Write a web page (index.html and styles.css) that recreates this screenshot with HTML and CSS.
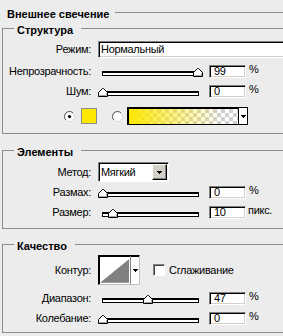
FILE: index.html
```html
<!DOCTYPE html>
<html lang="ru">
<head>
<meta charset="utf-8">
<title>Внешнее свечение</title>
<link rel="stylesheet" href="styles.css">
</head>
<body>
<div class="panel">
  <div class="panel-head">
    <span class="panel-title">Внешнее свечение</span>
    <span class="panel-rule"></span>
  </div>

  <fieldset class="group group-structure">
    <legend class="group-title">Структура</legend>
    <div class="row row-mode">
      <span class="lbl">Режим:</span>
      <div class="field field-mode">Нормальный</div>
    </div>
    <div class="row row-first">
      <span class="lbl">Непрозрачность:</span>
      <div class="slider" style="--v:0.99">
        <span class="track"></span>
        <svg class="thumb" width="10" height="9" viewBox="0 0 10 9"><path d="M0.5 8.5V4.5L4.5 0.5H5.5L9.5 4.5V8.5Z" fill="#fff" stroke="#000"/><path d="M8.5 4.9V7.5H1.5" fill="none" stroke="#a0a0a0"/></svg>
      </div>
      <div class="field num">99</div>
      <span class="unit">%</span>
    </div>
    <div class="row">
      <span class="lbl">Шум:</span>
      <div class="slider" style="--v:0">
        <span class="track"></span>
        <svg class="thumb" width="10" height="9" viewBox="0 0 10 9"><path d="M0.5 8.5V4.5L4.5 0.5H5.5L9.5 4.5V8.5Z" fill="#fff" stroke="#000"/><path d="M8.5 4.9V7.5H1.5" fill="none" stroke="#a0a0a0"/></svg>
      </div>
      <div class="field num">0</div>
      <span class="unit">%</span>
    </div>
    <div class="row row-color">
      <svg class="radio" width="11" height="11" viewBox="0 0 11 11"><circle cx="5.5" cy="5.5" r="5" fill="#fff" stroke="#d8d8d8"/><path d="M1.96 9.04A5 5 0 0 1 9.04 1.96" fill="none" stroke="#555"/><circle cx="5.5" cy="5.5" r="1.6" fill="#000"/></svg>
      <span class="swatch"></span>
      <svg class="radio radio-off" width="11" height="11" viewBox="0 0 11 11"><circle cx="5.5" cy="5.5" r="5" fill="#fff" stroke="#d8d8d8"/><path d="M1.96 9.04A5 5 0 0 1 9.04 1.96" fill="none" stroke="#555"/></svg>
      <div class="gradient">
        <span class="gradient-fill"></span>
        <span class="gradient-btn"><svg class="arrow" width="5" height="3" viewBox="0 0 5 3" shape-rendering="crispEdges"><path d="M0 0h5v1H0zM1 1h3v1H1zM2 2h1v1H2z"/></svg></span>
      </div>
    </div>
  </fieldset>

  <fieldset class="group group-elements">
    <legend class="group-title">Элементы</legend>
    <div class="row row-method">
      <span class="lbl">Метод:</span>
      <div class="combo">
        <span class="combo-text">Мягкий</span>
        <span class="combo-btn"><svg class="arrow" width="5" height="3" viewBox="0 0 5 3" shape-rendering="crispEdges"><path d="M0 0h5v1H0zM1 1h3v1H1zM2 2h1v1H2z"/></svg></span>
      </div>
    </div>
    <div class="row">
      <span class="lbl">Размах:</span>
      <div class="slider" style="--v:0">
        <span class="track"></span>
        <svg class="thumb" width="10" height="9" viewBox="0 0 10 9"><path d="M0.5 8.5V4.5L4.5 0.5H5.5L9.5 4.5V8.5Z" fill="#fff" stroke="#000"/><path d="M8.5 4.9V7.5H1.5" fill="none" stroke="#a0a0a0"/></svg>
      </div>
      <div class="field num">0</div>
      <span class="unit">%</span>
    </div>
    <div class="row">
      <span class="lbl">Размер:</span>
      <div class="slider" style="--v:0.1">
        <span class="track"></span>
        <svg class="thumb" width="10" height="9" viewBox="0 0 10 9"><path d="M0.5 8.5V4.5L4.5 0.5H5.5L9.5 4.5V8.5Z" fill="#fff" stroke="#000"/><path d="M8.5 4.9V7.5H1.5" fill="none" stroke="#a0a0a0"/></svg>
      </div>
      <div class="field num">10</div>
      <span class="unit unit-px">пикс.</span>
    </div>
  </fieldset>

  <fieldset class="group group-quality">
    <legend class="group-title">Качество</legend>
    <div class="row row-contour">
      <span class="lbl">Контур:</span>
      <div class="contour">
        <svg class="contour-preview" width="32" height="26" viewBox="0 0 32 26"><rect width="32" height="26" fill="#fff"/><path d="M0 26L32 0V26Z" fill="#808080"/></svg>
        <span class="contour-btn"><svg class="arrow" width="5" height="3" viewBox="0 0 5 3" shape-rendering="crispEdges"><path d="M0 0h5v1H0zM1 1h3v1H1zM2 2h1v1H2z"/></svg></span>
      </div>
      <span class="check"></span>
      <span class="check-label">Сглаживание</span>
    </div>
    <div class="row row-first">
      <span class="lbl">Диапазон:</span>
      <div class="slider" style="--v:0.47">
        <span class="track"></span>
        <svg class="thumb" width="10" height="9" viewBox="0 0 10 9"><path d="M0.5 8.5V4.5L4.5 0.5H5.5L9.5 4.5V8.5Z" fill="#fff" stroke="#000"/><path d="M8.5 4.9V7.5H1.5" fill="none" stroke="#a0a0a0"/></svg>
      </div>
      <div class="field num">47</div>
      <span class="unit">%</span>
    </div>
    <div class="row">
      <span class="lbl">Колебание:</span>
      <div class="slider" style="--v:0">
        <span class="track"></span>
        <svg class="thumb" width="10" height="9" viewBox="0 0 10 9"><path d="M0.5 8.5V4.5L4.5 0.5H5.5L9.5 4.5V8.5Z" fill="#fff" stroke="#000"/><path d="M8.5 4.9V7.5H1.5" fill="none" stroke="#a0a0a0"/></svg>
      </div>
      <div class="field num">0</div>
      <span class="unit">%</span>
    </div>
  </fieldset>
</div>
</body>
</html>
```

FILE: styles.css
```css
* { box-sizing: border-box; }

html, body {
  margin: 0;
  padding: 0;
}

body {
  width: 283px;
  height: 336px;
  overflow: hidden;
  background: #ececec;
  color: #000;
  font-family: "Liberation Sans", Arial, sans-serif;
  font-size: 11px;
  line-height: 13px;
  letter-spacing: -0.3px;
}

.panel-head {
  display: flex;
  align-items: flex-start;
  height: 20px;
  padding-left: 7px;
}

.panel-title {
  font-weight: bold;
  letter-spacing: 0;
  margin-top: 8px;
  white-space: nowrap;
}

.panel-rule {
  flex: 1;
  margin: 12px 0 0 6px;
  border-top: 1px solid #8c8c8c;
}

.group {
  margin: 0 -40px 0 2px;
  padding: 0;
  min-width: 0;
  border: 1px solid #8c8c8c;
}

.group-title {
  margin-left: 11px;
  padding: 4px 8px 0 3px;
  font-weight: bold;
  letter-spacing: 0;
  line-height: 13px;
}

.group-structure { padding: 4px 0 8px; }
.group-elements { margin-top: 8px; padding: 3px 0 6px; }
.group-quality { margin-top: 7px; padding: 2px 0 4px; }

.row {
  display: flex;
  align-items: center;
  height: 20px;
}

.row-mode { height: 17px; }
.row-first { margin-top: 3px; }

.lbl {
  flex: none;
  width: 88px;
  margin-right: 7px;
  text-align: right;
  white-space: nowrap;
}

.field {
  flex: none;
  background: #fff;
  border: 1px solid;
  border-color: #808080 #fff #fff #808080;
  box-shadow: inset 1px 1px 0 #000, inset -1px -1px 0 #d4d0c8;
  white-space: nowrap;
}

.field-mode {
  width: 200px;
  height: 17px;
  padding: 1px 0 0 2px;
}

.num {
  width: 37px;
  height: 13px;
  margin-left: 5px;
  padding-left: 4px;
  line-height: 11px;
}

.unit {
  margin-left: 3px;
  margin-top: -3px;
  white-space: nowrap;
}

.unit-px { margin-left: 2px; }

.slider {
  position: relative;
  flex: none;
  width: 106px;
  height: 9px;
  margin-top: 3px;
}

.track {
  display: block;
  width: 97px;
  height: 5px;
  margin: 3px 0 0 4px;
  background: #fff;
  border: 1px solid #000;
  border-top-width: 2px;
}

.thumb {
  position: absolute;
  top: 0;
  left: calc(var(--v) * 96px);
  display: block;
}

.row-color {
  height: 18px;
  margin-top: 6px;
  padding-left: 61px;
}

.radio { flex: none; display: block; }

.swatch {
  flex: none;
  width: 16px;
  height: 16px;
  margin-left: 6px;
  background: #ffe800;
  border: 1px solid #8c8c8c;
}

.radio-off { margin-left: 15px; }

.gradient {
  flex: none;
  display: flex;
  width: 121px;
  height: 18px;
  margin-left: 4px;
  border: 1px solid #000;
  box-shadow: inset 1px 1px 0 #000;
  background: #fff;
}

.gradient-fill {
  flex: 1;
  margin: 1px 0 0 1px;
  background:
    linear-gradient(to right, #ffe800 0%, rgba(255, 232, 0, 0.55) 35%, rgba(255, 232, 0, 0) 85%),
    repeating-conic-gradient(#cfcfcf 0 25%, #fff 0 50%) 0 0 / 8px 8px;
}

.gradient-btn {
  flex: none;
  width: 9px;
  display: flex;
  align-items: center;
  justify-content: center;
  border-left: 1px solid #000;
  background: #fff;
}

.arrow { display: block; }

.row-method { height: 20px; }

.combo {
  flex: none;
  display: flex;
  width: 71px;
  height: 20px;
  background: #fff;
  border: 1px solid;
  border-color: #808080 #fff #fff #808080;
  box-shadow: inset 1px 1px 0 #000;
}

.combo-text {
  flex: 1;
  padding: 3px 0 0 2px;
}

.combo-btn {
  flex: none;
  width: 15px;
  margin: 1px 1px 1px 0;
  display: flex;
  align-items: center;
  justify-content: center;
  background: #d4d0c8;
  border: 1px solid;
  border-color: #fff #000 #000 #fff;
  box-shadow: inset -1px -1px 0 #808080;
}

.row-contour { height: 30px; }

.contour {
  flex: none;
  display: flex;
  width: 42px;
  height: 30px;
  background: #fff;
  border: 1px solid;
  border-color: #000 #c0c0c0 #c0c0c0 #000;
  box-shadow: inset 1px 1px 0 #000;
}

.contour-preview {
  display: block;
  margin: 2px 0 0 1px;
}

.contour-btn {
  flex: none;
  width: 9px;
  display: flex;
  align-items: center;
  justify-content: center;
  border-left: 1px solid #808080;
  margin-left: 1px;
}

.check {
  flex: none;
  width: 12px;
  height: 12px;
  margin-left: 13px;
  background: #fff;
  border: 1px solid;
  border-color: #808080 #fff #fff #808080;
  box-shadow: inset 1px 1px 0 #404040;
}

.check-label {
  margin-left: 4px;
  white-space: nowrap;
}
```
